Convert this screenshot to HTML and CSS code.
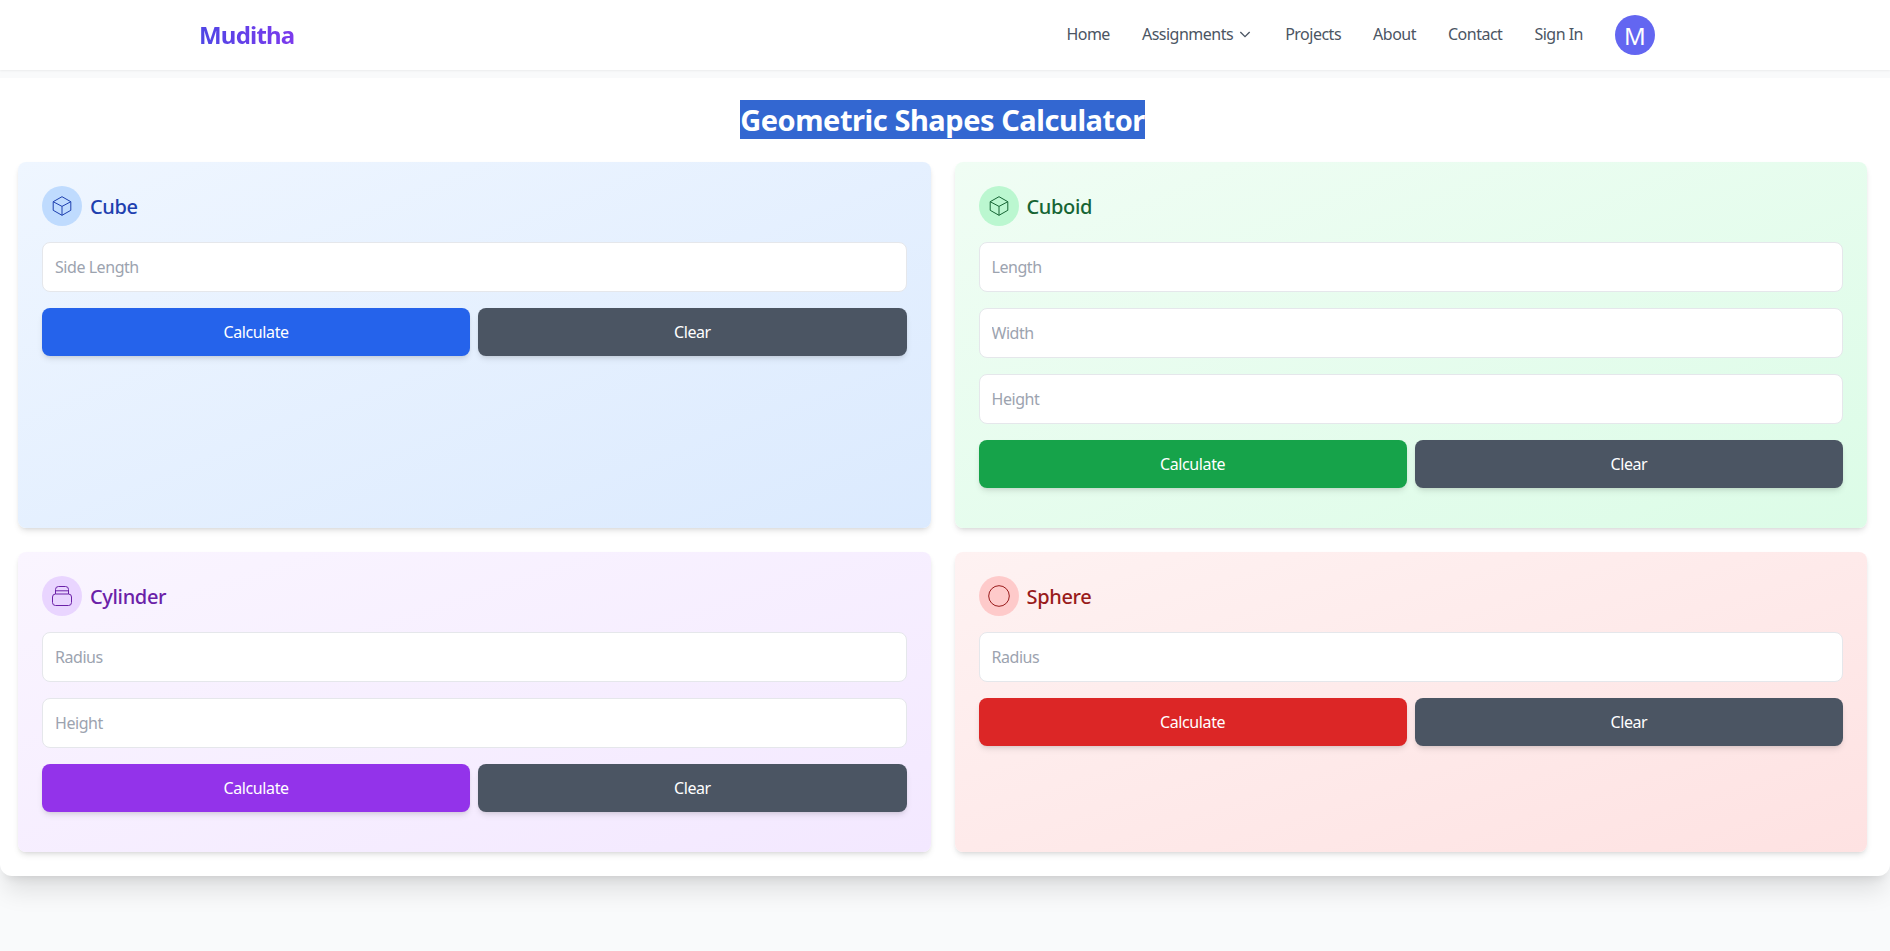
FILE: index.html
```html
<!DOCTYPE html>
<html lang="en">
<head>
  <meta charset="UTF-8">
  <meta name="viewport" content="width=device-width, initial-scale=1.0">
  <title>Geometric Shapes Calculator</title>
  <link rel="stylesheet" href="styles.css">
</head>
<body>
  <nav class="navbar">
    <a class="logo" href="#">Muditha</a>
    <div class="nav-links">
      <a href="#">Home</a>
      <a href="#" class="dropdown">Assignments
        <svg class="chevron" viewBox="0 0 24 24"><path d="M5 9l7 7 7-7"/></svg>
      </a>
      <a href="#">Projects</a>
      <a href="#">About</a>
      <a href="#">Contact</a>
      <a href="#">Sign In</a>
      <div class="avatar">M</div>
    </div>
  </nav>

  <main class="main">
    <h1 class="page-title"><span>Geometric Shapes Calculator</span></h1>
    <div class="shapes">
      <section class="card cube">
        <div class="card-head">
          <div class="icon">
            <svg viewBox="0 0 24 24"><path d="M12 2.700l8.800 5v8.600l-8.800 5-8.800-5V7.700z"/><path d="M3.200 7.700L12 12.400l8.800-4.700M12 12.400v8.900"/></svg>
          </div>
          <h2>Cube</h2>
        </div>
        <input type="number" placeholder="Side Length">
        <div class="buttons">
          <button class="calc">Calculate</button>
          <button class="clear">Clear</button>
        </div>
      </section>

      <section class="card cuboid">
        <div class="card-head">
          <div class="icon">
            <svg viewBox="0 0 24 24"><path d="M12 2.700l8.800 5v8.600l-8.800 5-8.800-5V7.700z"/><path d="M3.200 7.700L12 12.400l8.800-4.700M12 12.400v8.900"/></svg>
          </div>
          <h2>Cuboid</h2>
        </div>
        <input type="number" placeholder="Length">
        <input type="number" placeholder="Width">
        <input type="number" placeholder="Height">
        <div class="buttons">
          <button class="calc">Calculate</button>
          <button class="clear">Clear</button>
        </div>
      </section>

      <section class="card cylinder">
        <div class="card-head">
          <div class="icon">
            <svg viewBox="0 0 24 24"><rect x="2.500" y="10" width="19" height="11.500" rx="3"/><path d="M5.500 10V5.500a3 3 0 0 1 3-3h7a3 3 0 0 1 3 3V10M5.500 6.800h13"/></svg>
          </div>
          <h2>Cylinder</h2>
        </div>
        <input type="number" placeholder="Radius">
        <input type="number" placeholder="Height">
        <div class="buttons">
          <button class="calc">Calculate</button>
          <button class="clear">Clear</button>
        </div>
      </section>

      <section class="card sphere">
        <div class="card-head">
          <div class="icon">
            <svg viewBox="0 0 24 24"><circle cx="12" cy="12" r="10.300"/></svg>
          </div>
          <h2>Sphere</h2>
        </div>
        <input type="number" placeholder="Radius">
        <div class="buttons">
          <button class="calc">Calculate</button>
          <button class="clear">Clear</button>
        </div>
      </section>
    </div>
  </main>
</body>
</html>
```

FILE: styles.css
```css
* {
  box-sizing: border-box;
}
body {
  background-color: #f9fafb;
  color: #1f2937;
  font-family: "Noto Sans", "Open Sans", sans-serif;
  font-size: 16px;
  margin: 0;
  min-height: 951px;
}
a {
  color: inherit;
  text-decoration: none;
}

.navbar {
  background-color: #fff;
  box-shadow: 0 1px 2px rgba(0, 0, 0, 0.06);
  display: flex;
  align-items: center;
  justify-content: space-between;
  height: 70px;
  padding: 0 235px 0 199px;
  margin-bottom: 8px;
}
.logo {
  background: linear-gradient(90deg, #4f46e5, #7c3aed);
  -webkit-background-clip: text;
  background-clip: text;
  color: transparent;
  font-size: 24px;
  font-weight: 700;
  letter-spacing: -0.8px;
  padding-bottom: 2px;
}
.nav-links {
  color: #4b5563;
  display: flex;
  align-items: center;
  gap: 32px;
  letter-spacing: -0.5px;
}
.nav-links a {
  padding-bottom: 2px;
}
.dropdown {
  display: flex;
  align-items: center;
  gap: 4px;
}
.chevron {
  width: 16px;
  height: 16px;
  fill: none;
  stroke: #4b5563;
  stroke-width: 2;
}
.avatar {
  background-color: #6366f1;
  border-radius: 50%;
  color: #fff;
  display: flex;
  align-items: center;
  justify-content: center;
  font-size: 24px;
  width: 40px;
  height: 40px;
  letter-spacing: 0;
}

.main {
  background-color: #fff;
  border-radius: 0 0 12px 12px;
  box-shadow: 0 20px 25px -5px rgba(0, 0, 0, 0.1), 0 8px 10px -6px rgba(0, 0, 0, 0.1);
  padding: 24px 23px 24px 18px;
}
.page-title {
  font-size: 29px;
  font-weight: 700;
  line-height: 36px;
  margin: 0 0 24px;
  text-align: center;
  letter-spacing: -0.45px;
}
.page-title span {
  background-color: #3367d1;
  color: #fff;
}

.shapes {
  display: grid;
  grid-template-columns: 1fr 1fr;
  gap: 24px;
}
.card {
  border-radius: 8px;
  box-shadow: 0 4px 6px -1px rgba(0, 0, 0, 0.1), 0 2px 4px -2px rgba(0, 0, 0, 0.1);
  padding: 24px 24px 40px;
}
.card-head {
  display: flex;
  align-items: center;
  gap: 8px;
  margin-bottom: 16px;
}
.card-head h2 {
  font-size: 20px;
  font-weight: 500;
  margin: 0;
  letter-spacing: -0.35px;
}
.icon {
  border-radius: 50%;
  display: flex;
  align-items: center;
  justify-content: center;
  width: 40px;
  height: 40px;
}
.icon svg {
  width: 24px;
  height: 24px;
  fill: none;
  stroke-width: 1;
  stroke-linejoin: round;
}
input {
  background-color: #fff;
  border: 1px solid #e5e7eb;
  border-radius: 8px;
  display: block;
  font-family: inherit;
  font-size: 16px;
  height: 50px;
  margin-bottom: 16px;
  padding: 0 12px;
  width: 100%;
}
input::placeholder {
  color: #9ca3af;
  letter-spacing: -0.45px;
}
.buttons {
  display: flex;
  gap: 8px;
}
button {
  border: none;
  border-radius: 8px;
  box-shadow: 0 4px 6px -1px rgba(0, 0, 0, 0.1), 0 2px 4px -2px rgba(0, 0, 0, 0.1);
  color: #fff;
  flex: 1;
  font-family: inherit;
  font-size: 16px;
  height: 48px;
  letter-spacing: -0.4px;
  cursor: pointer;
}
.clear {
  background-color: #4b5563;
}

.cube {
  background: linear-gradient(to bottom right, #eff6ff, #dbeafe);
}
.cube .icon {
  background-color: #bfdbfe;
}
.cube svg {
  stroke: #1e40af;
}
.cube h2 {
  color: #1e40af;
}
.cube .calc {
  background-color: #2563eb;
}

.cuboid {
  background: linear-gradient(to bottom right, #f0fdf4, #dcfce7);
}
.cuboid .icon {
  background-color: #bbf7d0;
}
.cuboid svg {
  stroke: #166534;
}
.cuboid h2 {
  color: #166534;
}
.cuboid .calc {
  background-color: #16a34a;
}

.cylinder {
  background: linear-gradient(to bottom right, #faf5ff, #f3e8ff);
}
.cylinder .icon {
  background-color: #e9d5ff;
}
.cylinder svg {
  stroke: #6b21a8;
}
.cylinder h2 {
  color: #6b21a8;
}
.cylinder .calc {
  background-color: #9333ea;
}

.sphere {
  background: linear-gradient(to bottom right, #fef2f2, #fee2e2);
}
.sphere .icon {
  background-color: #fecaca;
}
.sphere svg {
  stroke: #991b1b;
}
.sphere h2 {
  color: #991b1b;
}
.sphere .calc {
  background-color: #dc2626;
}
```
